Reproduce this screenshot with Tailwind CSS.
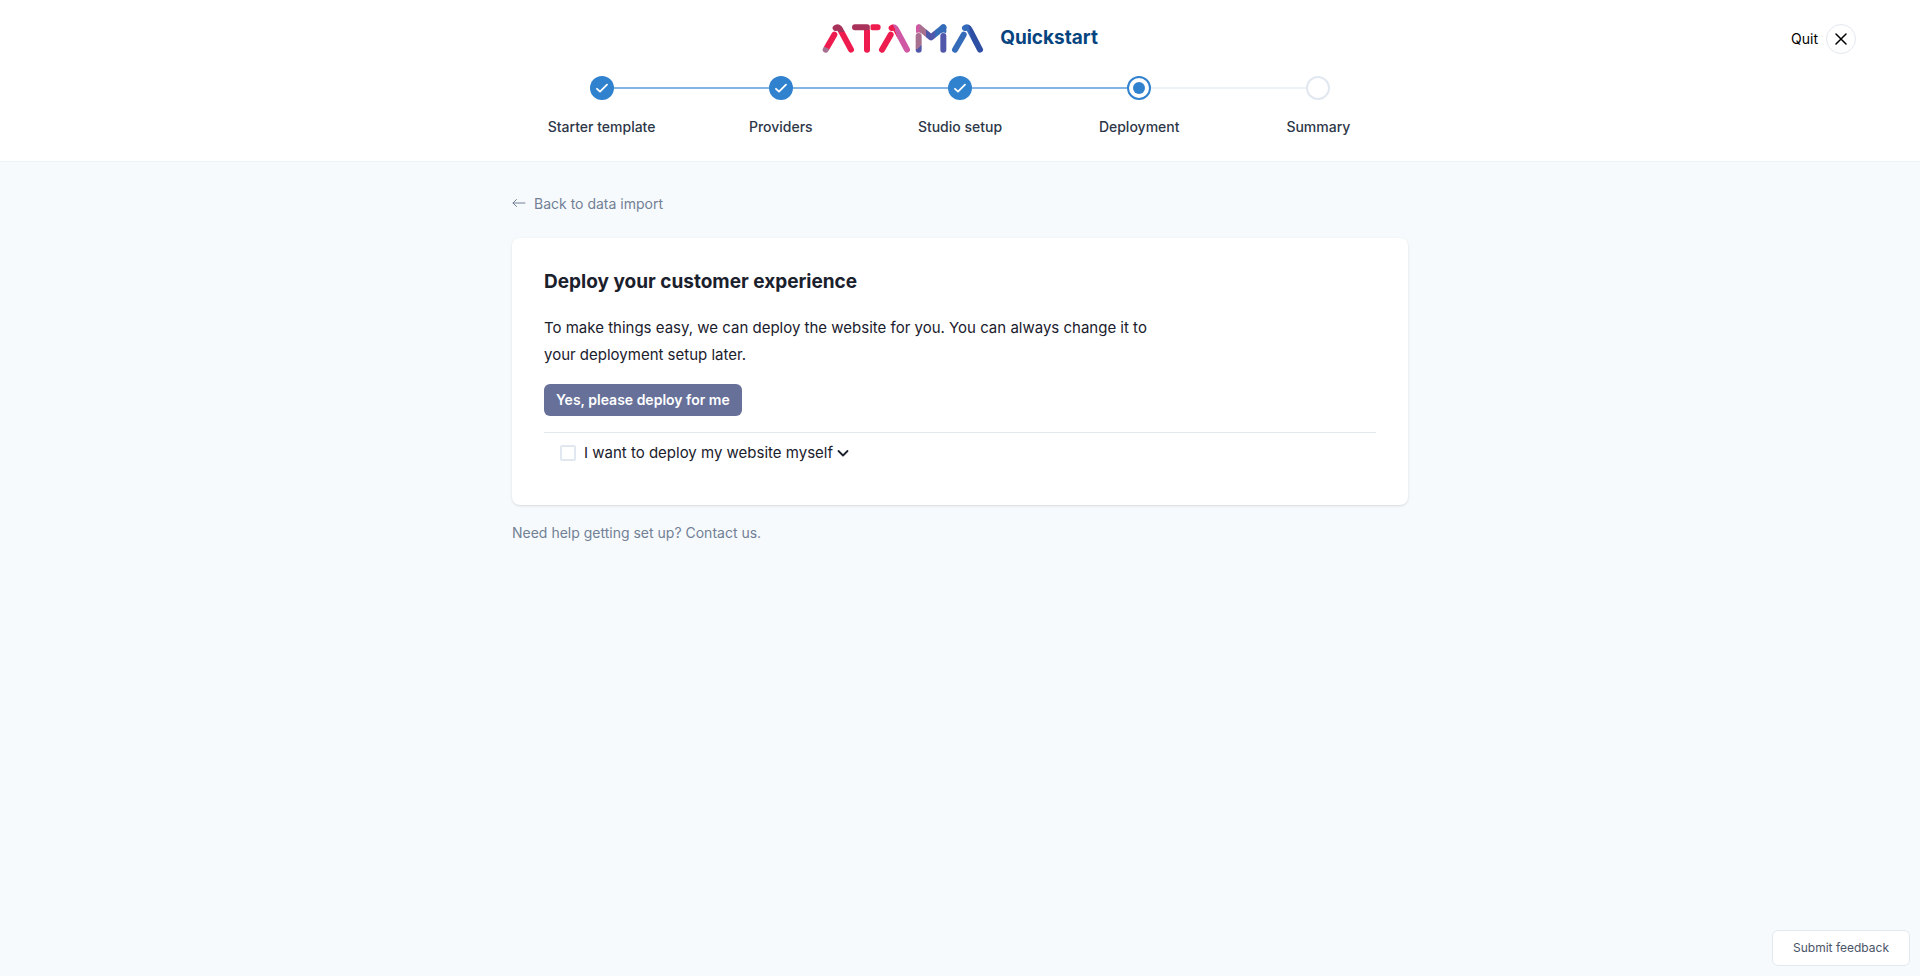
<!DOCTYPE html>
<html lang="en">
<head>
<meta charset="utf-8">
<meta name="viewport" content="width=device-width, initial-scale=1">
<title>Atama Quickstart</title>
<script src="https://cdn.jsdelivr.net/npm/@tailwindcss/browser@4"></script>
</head>
<body class="flex min-h-screen flex-col bg-[#f7fafc] font-['Inter',sans-serif] text-[#1a202c]">
<header class="border-b border-[#edf2f7] bg-white pt-4 pb-[23px]">
  <div class="grid grid-cols-[1fr_auto_1fr] items-center px-16">
    <div></div>
    <div class="flex h-11 items-center gap-4">
      <svg class="h-[29px] w-[162px]" viewBox="35 41 484 87" fill="none" stroke-width="18" stroke-linecap="round" stroke-linejoin="round" role="img" aria-label="Atama">
        <defs>
          <linearGradient id="a1" gradientUnits="userSpaceOnUse" x1="0" y1="42" x2="0" y2="126"><stop offset=".29" stop-color="#a9325a"/><stop offset=".29" stop-color="#ee1c4e"/></linearGradient>
          <linearGradient id="a1l" gradientUnits="userSpaceOnUse" x1="36" y1="126" x2="54" y2="96"><stop offset=".5" stop-color="#a8708f"/><stop offset=".5" stop-color="#ee1c4e"/></linearGradient>
          <linearGradient id="a2" gradientUnits="userSpaceOnUse" x1="238" y1="62" x2="262" y2="54"><stop offset=".6" stop-color="#ee1c4e"/><stop offset=".6" stop-color="#d057a4"/></linearGradient>
          <linearGradient id="m" gradientUnits="userSpaceOnUse" x1="316" y1="0" x2="407" y2="0"><stop offset=".1" stop-color="#d057a4"/><stop offset=".14" stop-color="#a8708f"/><stop offset=".34" stop-color="#a8708f"/><stop offset=".34" stop-color="#5158aa"/><stop offset=".62" stop-color="#5158aa"/><stop offset=".62" stop-color="#356cba"/></linearGradient>
          <linearGradient id="ml" gradientUnits="userSpaceOnUse" x1="316" y1="80" x2="346" y2="118"><stop offset=".62" stop-color="#a8708f"/><stop offset=".62" stop-color="#5158aa"/></linearGradient>
          <linearGradient id="a3" gradientUnits="userSpaceOnUse" x1="470" y1="94" x2="500" y2="88"><stop offset=".35" stop-color="#356cba"/><stop offset=".5" stop-color="#2f4fa4"/></linearGradient>
        </defs>
        <path stroke="url(#a1)" d="M75 53Q83 46 90 60L121 118"/>
        <path stroke="#fff" stroke-width="22" d="M45 118 71 73"/>
        <path stroke="url(#a1l)" d="M45 118 71 73"/>
        <path stroke="#ee1c4e" d="M169 60v58M186 51h15"/>
        <path stroke="#a9325a" d="M133 51h36"/>
        <path stroke="#fff" stroke-width="2" stroke-linecap="butt" d="M179 42v18"/>
        <path stroke="url(#a2)" d="M243 53Q251 46 258 60L289 118"/>
        <path stroke="#fff" stroke-width="22" d="M214 118 240 73"/>
        <path stroke="#ee1c4e" d="M214 118 240 73"/>
        <path stroke="url(#m)" d="M325 51 361 81 398 51M325 51v12"/>
        <path stroke="#356cba" d="M398 51v12"/>
        <path stroke="#fff" stroke-width="21" d="M324 77v41M398 77v41"/>
        <path stroke="url(#ml)" d="M324 77v41"/>
        <path stroke="#5158aa" d="M398 77v41"/>
        <path stroke="url(#a3)" d="M463 53Q471 46 478 60L508 118"/>
        <path stroke="#fff" stroke-width="22" d="M433 118 459 73"/>
        <path stroke="#356cba" d="M433 118 459 73"/>
      </svg>
      <h1 class="text-[19px] leading-7 font-bold text-[#064480]">Quickstart</h1>
    </div>
    <button type="button" class="flex items-center gap-2 justify-self-end pt-0.5 text-sm text-black">
      Quit
      <span class="flex size-[30px] items-center justify-center rounded-full border border-[#e2e8f0]">
        <svg class="size-3" viewBox="0 0 12 12" fill="none" stroke="currentColor" stroke-width="1.5" stroke-linecap="round"><path d="M1 1l10 10M11 1 1 11"/></svg>
      </span>
    </button>
  </div>
  <ol class="mx-auto grid max-w-4xl grid-cols-5 pt-4 text-center text-sm font-medium text-[#2d3748]">
    <li class="flex flex-col gap-4">
      <div class="flex items-center"><span class="flex-1"></span><span class="flex size-6 items-center justify-center rounded-full bg-[#3182ce]"><svg class="size-3" viewBox="0 0 12 12" fill="none" stroke="#fff" stroke-width="1.8" stroke-linecap="round" stroke-linejoin="round"><path d="M1 6.8 4 9.6 11 2.6"/></svg></span><span class="h-0.5 flex-1 bg-[#83b4e2]"></span></div>
      <span class="leading-[22px]">Starter template</span>
    </li>
    <li class="flex flex-col gap-4">
      <div class="flex items-center"><span class="h-0.5 flex-1 bg-[#83b4e2]"></span><span class="flex size-6 items-center justify-center rounded-full bg-[#3182ce]"><svg class="size-3" viewBox="0 0 12 12" fill="none" stroke="#fff" stroke-width="1.8" stroke-linecap="round" stroke-linejoin="round"><path d="M1 6.8 4 9.6 11 2.6"/></svg></span><span class="h-0.5 flex-1 bg-[#83b4e2]"></span></div>
      <span class="leading-[22px]">Providers</span>
    </li>
    <li class="flex flex-col gap-4">
      <div class="flex items-center"><span class="h-0.5 flex-1 bg-[#83b4e2]"></span><span class="flex size-6 items-center justify-center rounded-full bg-[#3182ce]"><svg class="size-3" viewBox="0 0 12 12" fill="none" stroke="#fff" stroke-width="1.8" stroke-linecap="round" stroke-linejoin="round"><path d="M1 6.8 4 9.6 11 2.6"/></svg></span><span class="h-0.5 flex-1 bg-[#83b4e2]"></span></div>
      <span class="leading-[22px]">Studio setup</span>
    </li>
    <li class="flex flex-col gap-4" aria-current="step">
      <div class="flex items-center"><span class="h-0.5 flex-1 bg-[#83b4e2]"></span><span class="flex size-6 items-center justify-center rounded-full border-2 border-[#3182ce]"><span class="size-3 rounded-full bg-[#3182ce]"></span></span><span class="h-0.5 flex-1 bg-[#edf2f7]"></span></div>
      <span class="leading-[22px]">Deployment</span>
    </li>
    <li class="flex flex-col gap-4">
      <div class="flex items-center"><span class="h-0.5 flex-1 bg-[#edf2f7]"></span><span class="size-6 rounded-full border-2 border-[#e2e8f0]"></span><span class="flex-1"></span></div>
      <span class="leading-[22px]">Summary</span>
    </li>
  </ol>
</header>
<main class="mx-auto w-full max-w-4xl flex-1 pt-8 text-[#718096]">
  <a href="#" class="flex w-fit items-center gap-2 text-sm">
    <svg class="h-3 w-3.5" viewBox="0 0 14 12" fill="none" stroke="currentColor" stroke-linecap="round" stroke-linejoin="round"><path d="M13 5H1M4.500 1.500 1 5l3.500 3.500"/></svg>
    Back to data import
  </a>
  <section class="mt-6 rounded-lg bg-white px-8 pt-[30px] pb-10 text-[#1a202c] shadow">
    <h2 class="text-[19px] leading-7 font-bold">Deploy your customer experience</h2>
    <p class="mt-[18px] max-w-[620px] text-[15px] leading-[27px]">To make things easy, we can deploy the website for you. You can always change it to your deployment setup later.</p>
    <button type="button" class="mt-4 h-8 rounded-md bg-[#667099] px-3 text-sm font-semibold text-white">Yes, please deploy for me</button>
    <div class="mt-4 flex items-center gap-2 border-t border-[#e2e8f0] px-4 pt-2">
      <input id="self" type="checkbox" class="size-4 appearance-none rounded-xs border-2 border-[#e2e8f0]">
      <label for="self" class="flex items-center gap-1 text-[15px] leading-6">I want to deploy my website myself
        <svg class="h-2.5 w-3" viewBox="0 0 12 10" fill="none" stroke="currentColor" stroke-width="1.8" stroke-linecap="round" stroke-linejoin="round"><path d="M1.500 3 6 7.500 10.500 3"/></svg>
      </label>
    </div>
  </section>
  <p class="mt-[18px] text-sm">Need help getting set up? <a href="#">Contact us.</a></p>
</main>
<button type="button" class="fixed right-2.5 bottom-2.5 h-9 rounded-md border border-[#e2e8f0] bg-white px-5 text-xs text-[#4a5568]">Submit feedback</button>
</body>
</html>
